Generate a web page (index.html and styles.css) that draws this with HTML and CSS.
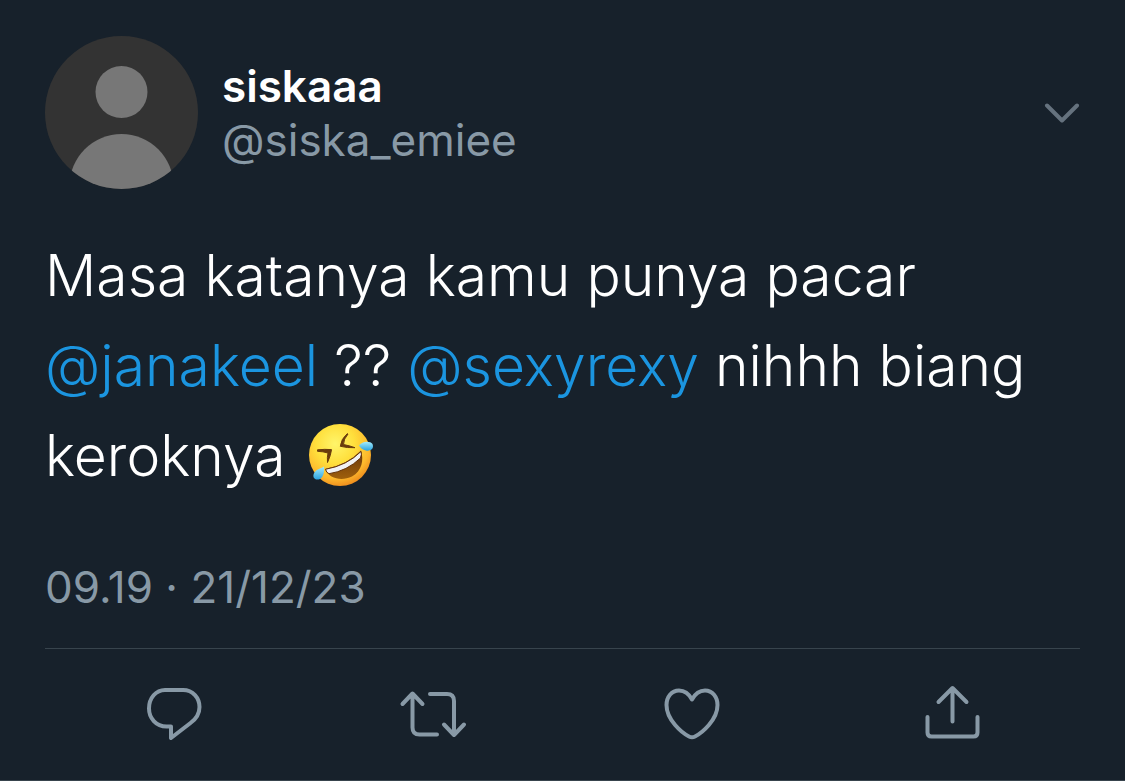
FILE: index.html
```html
<!DOCTYPE html>
<html lang="id">
<head>
<meta charset="utf-8">
<meta name="viewport" content="width=device-width, initial-scale=1">
<title>siskaaa (@siska_emiee)</title>
<link rel="stylesheet" href="styles.css">
</head>
<body>
<article class="tweet">
  <header class="author">
    <svg class="avatar" viewBox="0 0 153 153" role="img" aria-label="siskaaa">
      <defs><clipPath id="disc"><circle cx="76.5" cy="76.5" r="76.5"/></clipPath></defs>
      <g clip-path="url(#disc)">
        <rect width="153" height="153" fill="#333"/>
        <circle cx="76.500" cy="56" r="26" fill="#777"/>
        <circle cx="76.500" cy="150" r="52" fill="#777"/>
      </g>
    </svg>
    <div class="names">
      <span class="name">siskaaa</span>
      <span class="handle">@siska_emiee</span>
    </div>
    <button class="more" type="button" aria-label="More">
      <svg class="chevron" viewBox="0 0 36 20"><path d="M3 2.500 18 17.500 33 2.500"/></svg>
    </button>
  </header>
  <p class="text">Masa katanya kamu punya pacar <a href="#janakeel">@janakeel</a> ?? <a href="#sexyrexy">@sexyrexy</a> nihhh biang keroknya
    <svg class="emoji" viewBox="0 0 66 64" role="img" aria-label="Rolling on the floor laughing">
      <defs>
        <radialGradient id="face" cx=".42" cy=".32" r=".7"><stop offset="0" stop-color="#fff56a"/><stop offset=".45" stop-color="#ffdf3c"/><stop offset=".8" stop-color="#fdb82c"/><stop offset="1" stop-color="#ee8c1d"/></radialGradient>
        <linearGradient id="mouth" x1="0" y1="0" x2="0" y2="1"><stop offset="0" stop-color="#65330a"/><stop offset="1" stop-color="#a0600c"/></linearGradient>
        <linearGradient id="tear" x1="0" y1="0" x2="0" y2="1"><stop offset="0" stop-color="#a4ecfd"/><stop offset="1" stop-color="#2ba3df"/></linearGradient>
      </defs>
      <circle cx="32" cy="32" r="31" fill="url(#face)"/>
      <path d="M17 46Q39 42 53 27.500C56 37 54 48 44 53.500C34 58.500 21 56 17 46Z" fill="url(#mouth)"/>
      <path d="M17.500 46.300Q39 42.500 53 28.500Q54 31 52.500 35Q39 48 21 50.700Q18.500 50 17.500 46.300Z" fill="#f1f1f4" stroke="#65330a" stroke-width="1"/>
      <path d="M9.500 26.800Q17 26 23.500 26.600Q23 32 19.500 39.500Q19 34 20 30Q15 28.500 9.500 28.300ZM40 11Q35.500 16 35.500 21.500Q41 22.500 47 24.700Q39 25 32.300 23.300Q33 16 39.200 10.700Z" fill="#6a3c0c" stroke="#6a3c0c" stroke-width="1" stroke-linejoin="round"/>
      <path d="M51 22.500C54 18 62 17.500 64.500 21C66.500 26 62 28.500 58 27.500C54.500 27 52.500 25 51 22.500Z" fill="url(#tear)"/>
      <path d="M16 43.500C16.500 49 15.500 54 12 56C7 58 3.500 54 6.500 49.500C9 46 13 45.500 16 43.500Z" fill="url(#tear)"/>
    </svg>
  </p>
  <time class="date" datetime="2023-12-21T09:19">09.19 · 21/12/23</time>
  <footer class="actions">
    <button type="button" aria-label="Reply">
      <svg class="icon" viewBox="0 0 72 64"><path d="M27 10H45C55 10 61.500 18 61.500 27C61.500 34 58 39 52.500 43L33 58V46.500H28.500C18 46.500 11 38 11 28.500C11 18 18 10 27 10Z"/></svg>
    </button>
    <button type="button" aria-label="Retweet">
      <svg class="icon" viewBox="0 0 72 64"><path d="M5.500 24 15.500 13.500 25.500 24M15.500 14V47.500Q15.500 54.500 22.500 54.500H40M33 14H50Q57 14 57 21V54M47 44.500 57 55 67 44.500"/></svg>
    </button>
    <button type="button" aria-label="Like">
      <svg class="icon" viewBox="0 0 72 64"><path d="M36 19.500C33 14 28.500 10.500 23 10.500C15.500 10.500 10.500 17 10.500 25C10.500 40 26 53 33 56.500Q36 58 39 56.500C46 53 61.500 40 61.500 25C61.500 17 56.500 10.500 49 10.500C43.500 10.500 39 14 36 19.500Z"/></svg>
    </button>
    <button type="button" aria-label="Share">
      <svg class="icon" viewBox="0 0 72 64"><path d="M23.500 22 37.500 8 51.500 22M37.500 9V41.500M12.500 37V52.500Q12.500 56.500 16.500 56.500H58.500Q62.500 56.500 62.500 52.500V37"/></svg>
    </button>
  </footer>
</article>
</body>
</html>
```
FILE: styles.css
```css
* { box-sizing: border-box; }
body {
  margin: 0;
  background: #17212b;
  color: #fff;
  font-family: Inter, "Liberation Sans", sans-serif;
}
.tweet {
  padding: 36px 45px;
  border-bottom: 1px solid #38444d;
}
.author { display: flex; align-items: center; }
.avatar { width: 153px; height: 153px; flex: none; }
.names {
  display: flex;
  flex-direction: column;
  flex: 1;
  min-width: 0;
  padding-left: 24px;
}
.name, .handle { font-size: 44px; line-height: 54px; }
.name { font-weight: 600; }
.handle, .date { color: #8899a6; }
button {
  display: flex;
  padding: 0;
  border: 0;
  background: none;
  color: #8899a6;
  cursor: pointer;
}
svg { display: block; }
.chevron { width: 36px; height: 20px; }
.chevron path {
  fill: none;
  stroke: #65727e;
  stroke-width: 4;
  stroke-linecap: round;
  stroke-linejoin: round;
}
.text {
  margin: 42px 0 0;
  font-size: 57px;
  font-weight: 300;
  line-height: 90px;
}
.text a { color: #1b95e0; text-decoration: none; }
.emoji {
  display: inline-block;
  width: 66px;
  height: 64px;
  margin-left: 7px;
  vertical-align: -11px;
}
.date {
  display: block;
  margin-top: 56px;
  font-size: 44px;
  line-height: 60px;
}
.actions {
  display: grid;
  grid-template-columns: repeat(4, 1fr);
  justify-items: center;
  margin-top: 31px;
  padding-top: 31px;
  border-top: 1px solid #38444d;
}
.icon { width: 72px; height: 64px; }
.icon path {
  fill: none;
  stroke: currentColor;
  stroke-width: 4;
  stroke-linecap: round;
  stroke-linejoin: round;
}
```
